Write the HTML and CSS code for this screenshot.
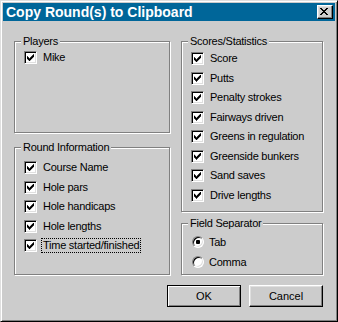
FILE: index.html
```html
<!DOCTYPE html>
<html lang="en">
<head>
    <meta charset="UTF-8">
    <title>Copy Round(s) to Clipboard</title>
    <link rel="stylesheet" href="styles.css">
</head>
<body>
    <div class="dialog">
        <div class="titlebar">
            <span class="title">Copy Round(s) to Clipboard</span>
            <div class="close">
                <svg width="8" height="7" viewBox="0 0 8 7">
                    <path d="M0 0h2v1h-2zM6 0h2v1h-2zM1 1h2v1h-2zM5 1h2v1h-2zM2 2h4v1h-4zM3 3h2v1h-2zM2 4h4v1h-4zM1 5h2v1h-2zM5 5h2v1h-2zM0 6h2v1h-2zM6 6h2v1h-2z" fill="#000"/>
                </svg>
            </div>
        </div>

        <div class="content">
            <div class="columns">
                <div class="column left">
                    <fieldset class="group players">
                        <legend>Players</legend>
                        <div class="items">
                            <label class="option"><span class="check"></span><span class="text">Mike</span></label>
                        </div>
                    </fieldset>

                    <fieldset class="group round">
                        <legend>Round Information</legend>
                        <div class="items">
                            <label class="option"><span class="check"></span><span class="text">Course Name</span></label>
                            <label class="option"><span class="check"></span><span class="text">Hole pars</span></label>
                            <label class="option"><span class="check"></span><span class="text">Hole handicaps</span></label>
                            <label class="option"><span class="check"></span><span class="text">Hole lengths</span></label>
                            <label class="option"><span class="check"></span><span class="text focus">Time started/finished</span></label>
                        </div>
                    </fieldset>
                </div>

                <div class="column right">
                    <fieldset class="group scores">
                        <legend>Scores/Statistics</legend>
                        <div class="items">
                            <label class="option"><span class="check"></span><span class="text">Score</span></label>
                            <label class="option"><span class="check"></span><span class="text">Putts</span></label>
                            <label class="option"><span class="check"></span><span class="text">Penalty strokes</span></label>
                            <label class="option"><span class="check"></span><span class="text">Fairways driven</span></label>
                            <label class="option"><span class="check"></span><span class="text">Greens in regulation</span></label>
                            <label class="option"><span class="check"></span><span class="text">Greenside bunkers</span></label>
                            <label class="option"><span class="check"></span><span class="text">Sand saves</span></label>
                            <label class="option"><span class="check"></span><span class="text">Drive lengths</span></label>
                        </div>
                    </fieldset>

                    <fieldset class="group separator">
                        <legend>Field Separator</legend>
                        <div class="items">
                            <label class="option"><span class="radio selected"></span><span class="text">Tab</span></label>
                            <label class="option"><span class="radio"></span><span class="text">Comma</span></label>
                        </div>
                    </fieldset>
                </div>
            </div>

            <div class="buttons">
                <button class="btn default">OK</button>
                <button class="btn">Cancel</button>
            </div>
        </div>
    </div>
</body>
</html>
```

FILE: styles.css
```css
* {
    box-sizing: border-box;
}

body {
    margin: 0;
    font-family: "Liberation Sans", Arial, sans-serif;
    font-size: 11px;
    letter-spacing: -0.25px;
    color: #000;
    background: #cccccc;
}

.dialog {
    width: 338px;
    height: 322px;
    padding: 2px;
    background: #cccccc;
    border: 1px solid;
    border-color: #dfdfdf #000 #000 #dfdfdf;
    box-shadow: inset 1px 1px #fff, inset -1px -1px #808080;
}

.titlebar {
    height: 18px;
    display: flex;
    align-items: center;
    justify-content: space-between;
    padding: 0 2px 0 3px;
    background: #006699;
}

.title {
    color: #fff;
    font-family: "Liberation Sans Narrow", "Liberation Sans", sans-serif;
    font-weight: bold;
    font-size: 14px;
    line-height: 18px;
    letter-spacing: 0;
}

.close {
    width: 16px;
    height: 14px;
    padding: 2px 0 0 2px;
    background: #cccccc;
    border: 1px solid;
    border-color: #fff #000 #000 #fff;
    box-shadow: inset -1px -1px #808080, inset 1px 1px #dfdfdf;
}

.close svg {
    display: block;
}

.content {
    padding: 14px 12px 0 11px;
}

.columns {
    display: flex;
    gap: 11px;
}

.column {
    display: flex;
    flex-direction: column;
}

.left {
    width: 156px;
}

.right {
    width: 142px;
}

/* etched group box */
.group {
    margin: 0;
    padding: 0;
    min-width: 0;
    border: 1px solid #808080;
    box-shadow: inset 1px 1px #fff, 1px 1px #fff;
}

.group legend {
    margin-left: 6px;
    padding: 0 2px;
    line-height: 13px;
    background: #cccccc;
}

.items {
    display: flex;
    flex-direction: column;
    padding-left: 9px;
}

.players .items {
    height: 84px;
}

.round {
    margin-top: 8px;
}

.round .items {
    height: 120px;
    padding-top: 4px;
}

.scores .items {
    height: 163px;
    padding-top: 1px;
}

.separator {
    margin-top: 5px;
}

.separator .items {
    height: 44px;
    padding-top: 2px;
}

.option {
    display: flex;
    align-items: center;
    height: 19.5px;
}

.separator .option {
    height: 20px;
}

.check {
    position: relative;
    flex: none;
    width: 13px;
    height: 13px;
    background: #fff;
    border: 1px solid;
    border-color: #808080 #fff #fff #808080;
    box-shadow: inset 1px 1px #000, inset -1px -1px #dfdfdf;
}

.check::after {
    content: "";
    position: absolute;
    left: 2px;
    top: 2px;
    width: 7px;
    height: 7px;
    background: #000;
    clip-path: polygon(0 2px, 1px 2px, 1px 3px, 2px 3px, 2px 4px, 3px 4px, 3px 3px, 4px 3px, 4px 2px, 5px 2px, 5px 1px, 6px 1px, 6px 0, 7px 0, 7px 3px, 6px 3px, 6px 4px, 5px 4px, 5px 5px, 4px 5px, 4px 6px, 3px 6px, 3px 7px, 2px 7px, 2px 6px, 1px 6px, 1px 5px, 0 5px);
}

.radio {
    position: relative;
    flex: none;
    width: 12px;
    height: 12px;
    margin-left: 1px;
    border-radius: 50%;
    background: #fff;
    border: 1px solid;
    border-color: #808080 #fff #fff #808080;
    box-shadow: inset 1px 1px #000, inset -1px -1px #dfdfdf;
}

.radio.selected::after {
    content: "";
    position: absolute;
    left: 3px;
    top: 3px;
    width: 4px;
    height: 4px;
    border-radius: 1px;
    background: #000;
}

.text {
    margin-left: 4px;
    padding: 0 1px;
    line-height: 13px;
    border: 1px solid transparent;
    white-space: nowrap;
}

.radio + .text {
    margin-left: 3px;
}

.text.focus {
    border: 1px dotted #000;
}

.buttons {
    display: flex;
    justify-content: flex-end;
    gap: 8px;
    margin-top: 10px;
}

.btn {
    width: 74px;
    height: 22px;
    padding: 0;
    font: inherit;
    color: #000;
    background: #cccccc;
    border: 1px solid;
    border-color: #fff #000 #000 #fff;
    box-shadow: inset -1px -1px #808080, inset 1px 1px #dfdfdf;
}

.btn.default {
    border-color: #000;
    box-shadow: inset 1px 1px #fff, inset -1px -1px #808080;
}
```
